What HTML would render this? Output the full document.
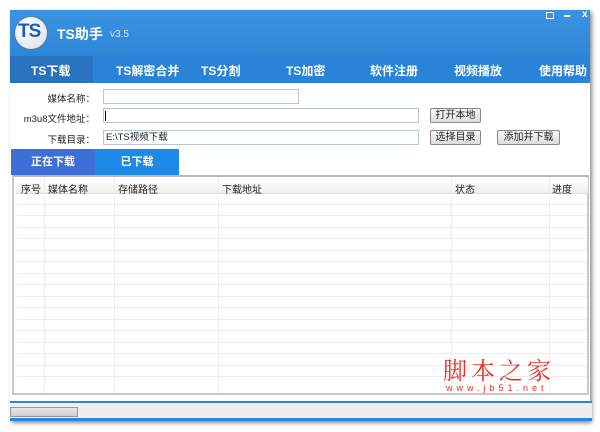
<!DOCTYPE html>
<html><head><meta charset="utf-8"><style>
*{margin:0;padding:0;box-sizing:border-box}
body{width:600px;height:432px;background:#fff;position:relative;overflow:hidden;font-family:"Liberation Sans","Noto Sans CJK SC",sans-serif;font-size:11px;color:#222}
.a{position:absolute}
.win{left:10px;top:10px;width:580px;height:411px;background:#fff;box-shadow:2px 2px 4px #888}
.title{left:10px;top:10px;width:580px;height:46px;background:linear-gradient(#3b93e0,#2f86d8)}
.tabs{left:10px;top:56px;width:580px;height:27px;background:#2b83d8;color:#fff;font-weight:bold;font-size:12px}
.tabs span{position:absolute;top:6px}
.lbl{font-size:9.5px;text-align:right;width:80px}
.inp{border:1px solid #bcc6d0;background:#fff;height:15px}
.btn{border:1px solid #888;border-radius:2px;background:linear-gradient(#f8f8f8,#dcdcdc);height:15px;font-size:10px;text-align:center;line-height:13px}
.hline{left:17px;width:570px;height:1px;background:#ececec}
.vline{top:178px;height:215px;width:1px;background:#eee}
.th{top:181px;font-size:10px}
</style></head><body>
<div class="a win"></div>
<div class="a title"></div>
<div class="a" style="left:15px;top:17px;width:32px;height:32px;border-radius:50%;background:radial-gradient(circle at 40% 35%,#fff,#d8dde4);box-shadow:0 0 2px #666"></div>
<div class="a" style="left:18px;top:21px;font-weight:bold;font-size:19px;color:#1d5bbf;letter-spacing:-1px">TS</div>
<div class="a" style="left:57px;top:24px;color:#fff;font-weight:bold;font-size:14px">TS助手</div>
<div class="a" style="left:110px;top:29px;color:#d8e8f8;font-size:10px">v3.5</div>
<div class="a" style="left:546px;top:12px;width:8px;height:7px;border:1px solid #fff"></div>
<div class="a" style="left:564px;top:15px;width:6px;height:2px;background:#fff"></div>
<div class="a" style="left:582px;top:9px;color:#fff;font-size:10px;font-weight:bold">x</div>
<div class="a tabs">
<div class="a" style="left:0;top:0;width:83px;height:27px;background:#2872c0"></div>
<span style="left:21px">TS下载</span><span style="left:106px">TS解密合并</span><span style="left:191px">TS分割</span><span style="left:276px">TS加密</span><span style="left:360px">软件注册</span><span style="left:444px">视频播放</span><span style="left:529px">使用帮助</span>
</div>
<div class="a lbl" style="left:15px;top:91px">媒体名称：</div>
<div class="a inp" style="left:103px;top:89px;width:196px"></div>
<div class="a lbl" style="left:15px;top:111px">m3u8文件地址：</div>
<div class="a inp" style="left:103px;top:108px;width:316px"></div>
<div class="a" style="left:105px;top:111px;width:1px;height:10px;background:#000"></div>
<div class="a lbl" style="left:15px;top:132px">下载目录：</div>
<div class="a inp" style="left:103px;top:130px;width:316px;font-size:9.5px;padding-left:2px;line-height:13px">E:\TS视频下载</div>
<div class="a btn" style="left:430px;top:108px;width:51px">打开本地</div>
<div class="a btn" style="left:430px;top:130px;width:51px">选择目录</div>
<div class="a btn" style="left:497px;top:130px;width:63px">添加并下载</div>
<div class="a" style="left:11px;top:149px;width:84px;height:26px;background:#3d6fd6;color:#fff;font-weight:bold;text-align:center;line-height:26px">正在下载</div>
<div class="a" style="left:95px;top:149px;width:84px;height:26px;background:#1e8ae8;color:#fff;font-weight:bold;text-align:center;line-height:26px">已下载</div>
<div class="a" style="left:12px;top:175px;width:577px;height:220px;border:2px solid #c8c8c8;border-top-color:#b8b8b8"></div>
<div class="a" style="left:16px;top:178px;width:572px;height:16px;background:linear-gradient(#fff,#f0f0f0);border-bottom:1px solid #ddd"></div>
<div class="a th" style="left:21px">序号</div><div class="a th" style="left:48px">媒体名称</div><div class="a th" style="left:118px">存储路径</div><div class="a th" style="left:222px">下载地址</div><div class="a th" style="left:455px">状态</div><div class="a th" style="left:552px">进度</div>
<div class="a vline" style="left:44px"></div><div class="a vline" style="left:114px"></div><div class="a vline" style="left:218px"></div><div class="a vline" style="left:451px"></div><div class="a vline" style="left:549px"></div>
<div class="a hline" style="top:204px"></div><div class="a hline" style="top:215px"></div><div class="a hline" style="top:227px"></div><div class="a hline" style="top:238px"></div><div class="a hline" style="top:250px"></div><div class="a hline" style="top:261px"></div><div class="a hline" style="top:273px"></div><div class="a hline" style="top:284px"></div><div class="a hline" style="top:296px"></div><div class="a hline" style="top:307px"></div><div class="a hline" style="top:319px"></div><div class="a hline" style="top:330px"></div><div class="a hline" style="top:342px"></div><div class="a hline" style="top:353px"></div><div class="a hline" style="top:365px"></div><div class="a hline" style="top:376px"></div>
<div class="a" style="left:443px;top:351px;color:#e8302a;font-size:24px;font-family:'Noto Serif CJK SC',serif;letter-spacing:4px">脚本之家</div>
<div class="a" style="left:446px;top:383px;color:#e8302a;font-size:9px;letter-spacing:4px">www.jb51.net</div>
<div class="a" style="left:10px;top:401px;width:582px;height:20px;background:#eeeeee;border-top:2px solid #2a86d8;border-bottom:3px solid #2a86d8"></div>
<div class="a" style="left:10px;top:407px;width:68px;height:10px;background:linear-gradient(#e6e6e6,#cfcfcf);border:1px solid #999"></div>
</body></html>
